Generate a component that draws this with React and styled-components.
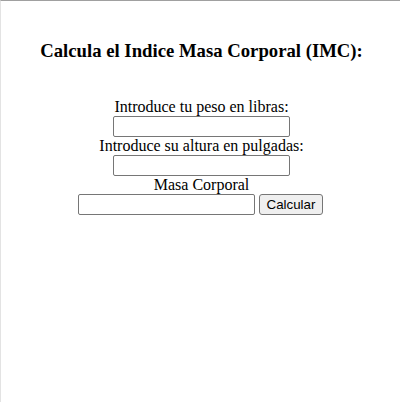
import React from "react";
import styled, { createGlobalStyle } from "styled-components";

const Global = createGlobalStyle`
  html, body { margin: 0; padding: 0; background: #ffffff; }
  body { font-family: "Liberation Serif", "Times New Roman", serif; color: #000; }
`;

const Frame = styled.div`
  box-sizing: border-box;
  min-height: 100vh;
  border-top: 1px solid #a0a0a0;
  border-left: 1px solid #e3e3e3;
  padding: 39px 7px 0 9px;
`;

const Title = styled.h3`
  margin: 0;
  text-align: center;
  font-size: 18.72px;
  line-height: 22px;
  font-weight: bold;
`;

const Form = styled.form`
  margin-top: 36px;
  display: flex;
  flex-direction: column;
  align-items: center;
`;

const Label = styled.label`
  font-size: 16px;
  line-height: 18px;
  height: 18px;
  text-align: center;
  white-space: nowrap;
`;

const Row = styled.div`
  display: flex;
  align-items: center;
  gap: 4px;
  margin-right: 2px;
`;

const TextInput = styled.input`
  box-sizing: border-box;
  width: 177px;
  height: 21px;
  margin: 0;
  padding: 1px 2px;
  border: 1px solid #767676;
  border-radius: 2px;
  background: #ffffff;
  font-family: "Liberation Sans", Arial, sans-serif;
  font-size: 13.33px;
`;

const Button = styled.button`
  box-sizing: border-box;
  width: 64px;
  height: 21px;
  margin: 0;
  padding: 1px 6px;
  border: 1px solid #767676;
  border-radius: 3px;
  background: #efefef;
  color: #000;
  font-family: "Liberation Sans", Arial, sans-serif;
  font-size: 13.33px;
  line-height: 17px;
`;

export default function App() {
  return (
    <>
      <Global />
      <Frame>
        <Title>Calcula el Indice Masa Corporal (IMC):</Title>
        <Form onSubmit={(e) => e.preventDefault()}>
          <Label htmlFor="peso">Introduce tu peso en libras:</Label>
          <TextInput id="peso" type="text" />
          <Label htmlFor="altura">Introduce su altura en pulgadas:</Label>
          <TextInput id="altura" type="text" />
          <Label htmlFor="imc">Masa Corporal</Label>
          <Row>
            <TextInput id="imc" type="text" />
            <Button type="button">Calcular</Button>
          </Row>
        </Form>
      </Frame>
    </>
  );
}
